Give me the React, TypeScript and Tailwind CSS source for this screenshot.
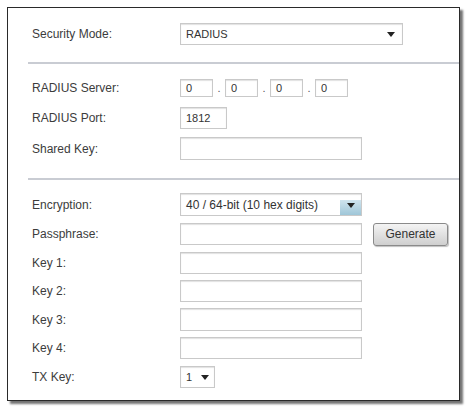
import type { ReactNode } from 'react'

const inputBox =
  'h-full border border-[#c9c9c9] bg-white shadow-[inset_0_1px_1px_rgba(0,0,0,0.12)]'

function Row({ label, className, children }: { label: string; className: string; children: ReactNode }) {
  return (
    <div className={`flex items-center ${className}`}>
      <div className="w-[172px] pl-[24px] text-[12px] text-[#3c3c3c]">{label}</div>
      <div className="flex h-full items-center">{children}</div>
    </div>
  )
}

function Caret() {
  return (
    <svg width="8" height="5" viewBox="0 0 8 5" aria-hidden="true">
      <path d="M0 0H8L4 5Z" fill="#222" />
    </svg>
  )
}

function Separator({ className }: { className: string }) {
  return <div className={`ml-[20px] h-[2px] bg-[#c9ccd3] ${className}`} />
}

export default function App() {
  return (
    <div className="h-[409px] w-[468px] bg-white pl-[7px] pt-[7px] font-['Liberation_Sans',Arial,sans-serif]">
      <div className="flex h-[394px] w-[453px] flex-col border border-[#2a2a2a] bg-white pt-[15px] shadow-[3px_3px_2px_rgba(0,0,0,0.55)]">
        <Row label="Security Mode:" className="h-[22px]">
          <div className={`${inputBox} flex w-[223px] items-center justify-between pl-[5px] pr-[7px] text-[11px] text-[#333]`}>
            <span>RADIUS</span>
            <Caret />
          </div>
        </Row>

        <Separator className="mt-[17px]" />

        <Row label="RADIUS Server:" className="mt-[15px] h-[18px]">
          {['0', '0', '0', '0'].map((v, i) => (
            <div key={i} className="flex h-full items-end">
              {i > 0 ? <span className="w-[12px] pb-[1px] text-center text-[11px] text-[#555]">.</span> : null}
              <div className={`${inputBox} flex w-[33px] items-center pl-[5px] text-[11px] text-[#333]`}>{v}</div>
            </div>
          ))}
        </Row>

        <Row label="RADIUS Port:" className="mt-[10px] h-[22px]">
          <div className={`${inputBox} flex w-[47px] items-center pl-[5px] text-[11px] text-[#333]`}>1812</div>
        </Row>

        <Row label="Shared Key:" className="mt-[8px] h-[23px]">
          <div className={`${inputBox} w-[182px]`} />
        </Row>

        <Separator className="mt-[18px]" />

        <Row label="Encryption:" className="mt-[13px] h-[23px]">
          <div className={`${inputBox} flex w-[182px] items-center justify-between pl-[5px] text-[12px] text-[#333]`}>
            <span>40 / 64-bit (10 hex digits)</span>
            <div className="flex h-[15px] w-[21px] items-start justify-center self-end bg-gradient-to-b from-[#cfe4ee] to-[#9fc6d8] pt-[3px]">
              <Caret />
            </div>
          </div>
        </Row>

        <Row label="Passphrase:" className="mt-[7px] h-[22px]">
          <div className={`${inputBox} w-[182px]`} />
          <button
            type="button"
            className="ml-[11px] h-[23px] w-[75px] rounded-[3px] border border-[#8a8a8a] bg-gradient-to-b from-[#f4f4f4] to-[#cfcfcf] text-[12px] text-[#333] shadow-[1px_1px_1px_rgba(0,0,0,0.25)]"
          >
            Generate
          </button>
        </Row>

        <Row label="Key 1:" className="mt-[7px] h-[22px]">
          <div className={`${inputBox} w-[182px]`} />
        </Row>

        <Row label="Key 2:" className="mt-[6px] h-[22px]">
          <div className={`${inputBox} w-[182px]`} />
        </Row>

        <Row label="Key 3:" className="mt-[6px] h-[23px]">
          <div className={`${inputBox} w-[182px]`} />
        </Row>

        <Row label="Key 4:" className="mt-[6px] h-[22px]">
          <div className={`${inputBox} w-[182px]`} />
        </Row>

        <Row label="TX Key:" className="mt-[7px] h-[22px]">
          <div className={`${inputBox} flex w-[35px] items-center justify-between pl-[5px] pr-[5px] text-[11px] text-[#333]`}>
            <span>1</span>
            <Caret />
          </div>
        </Row>
      </div>
    </div>
  )
}
